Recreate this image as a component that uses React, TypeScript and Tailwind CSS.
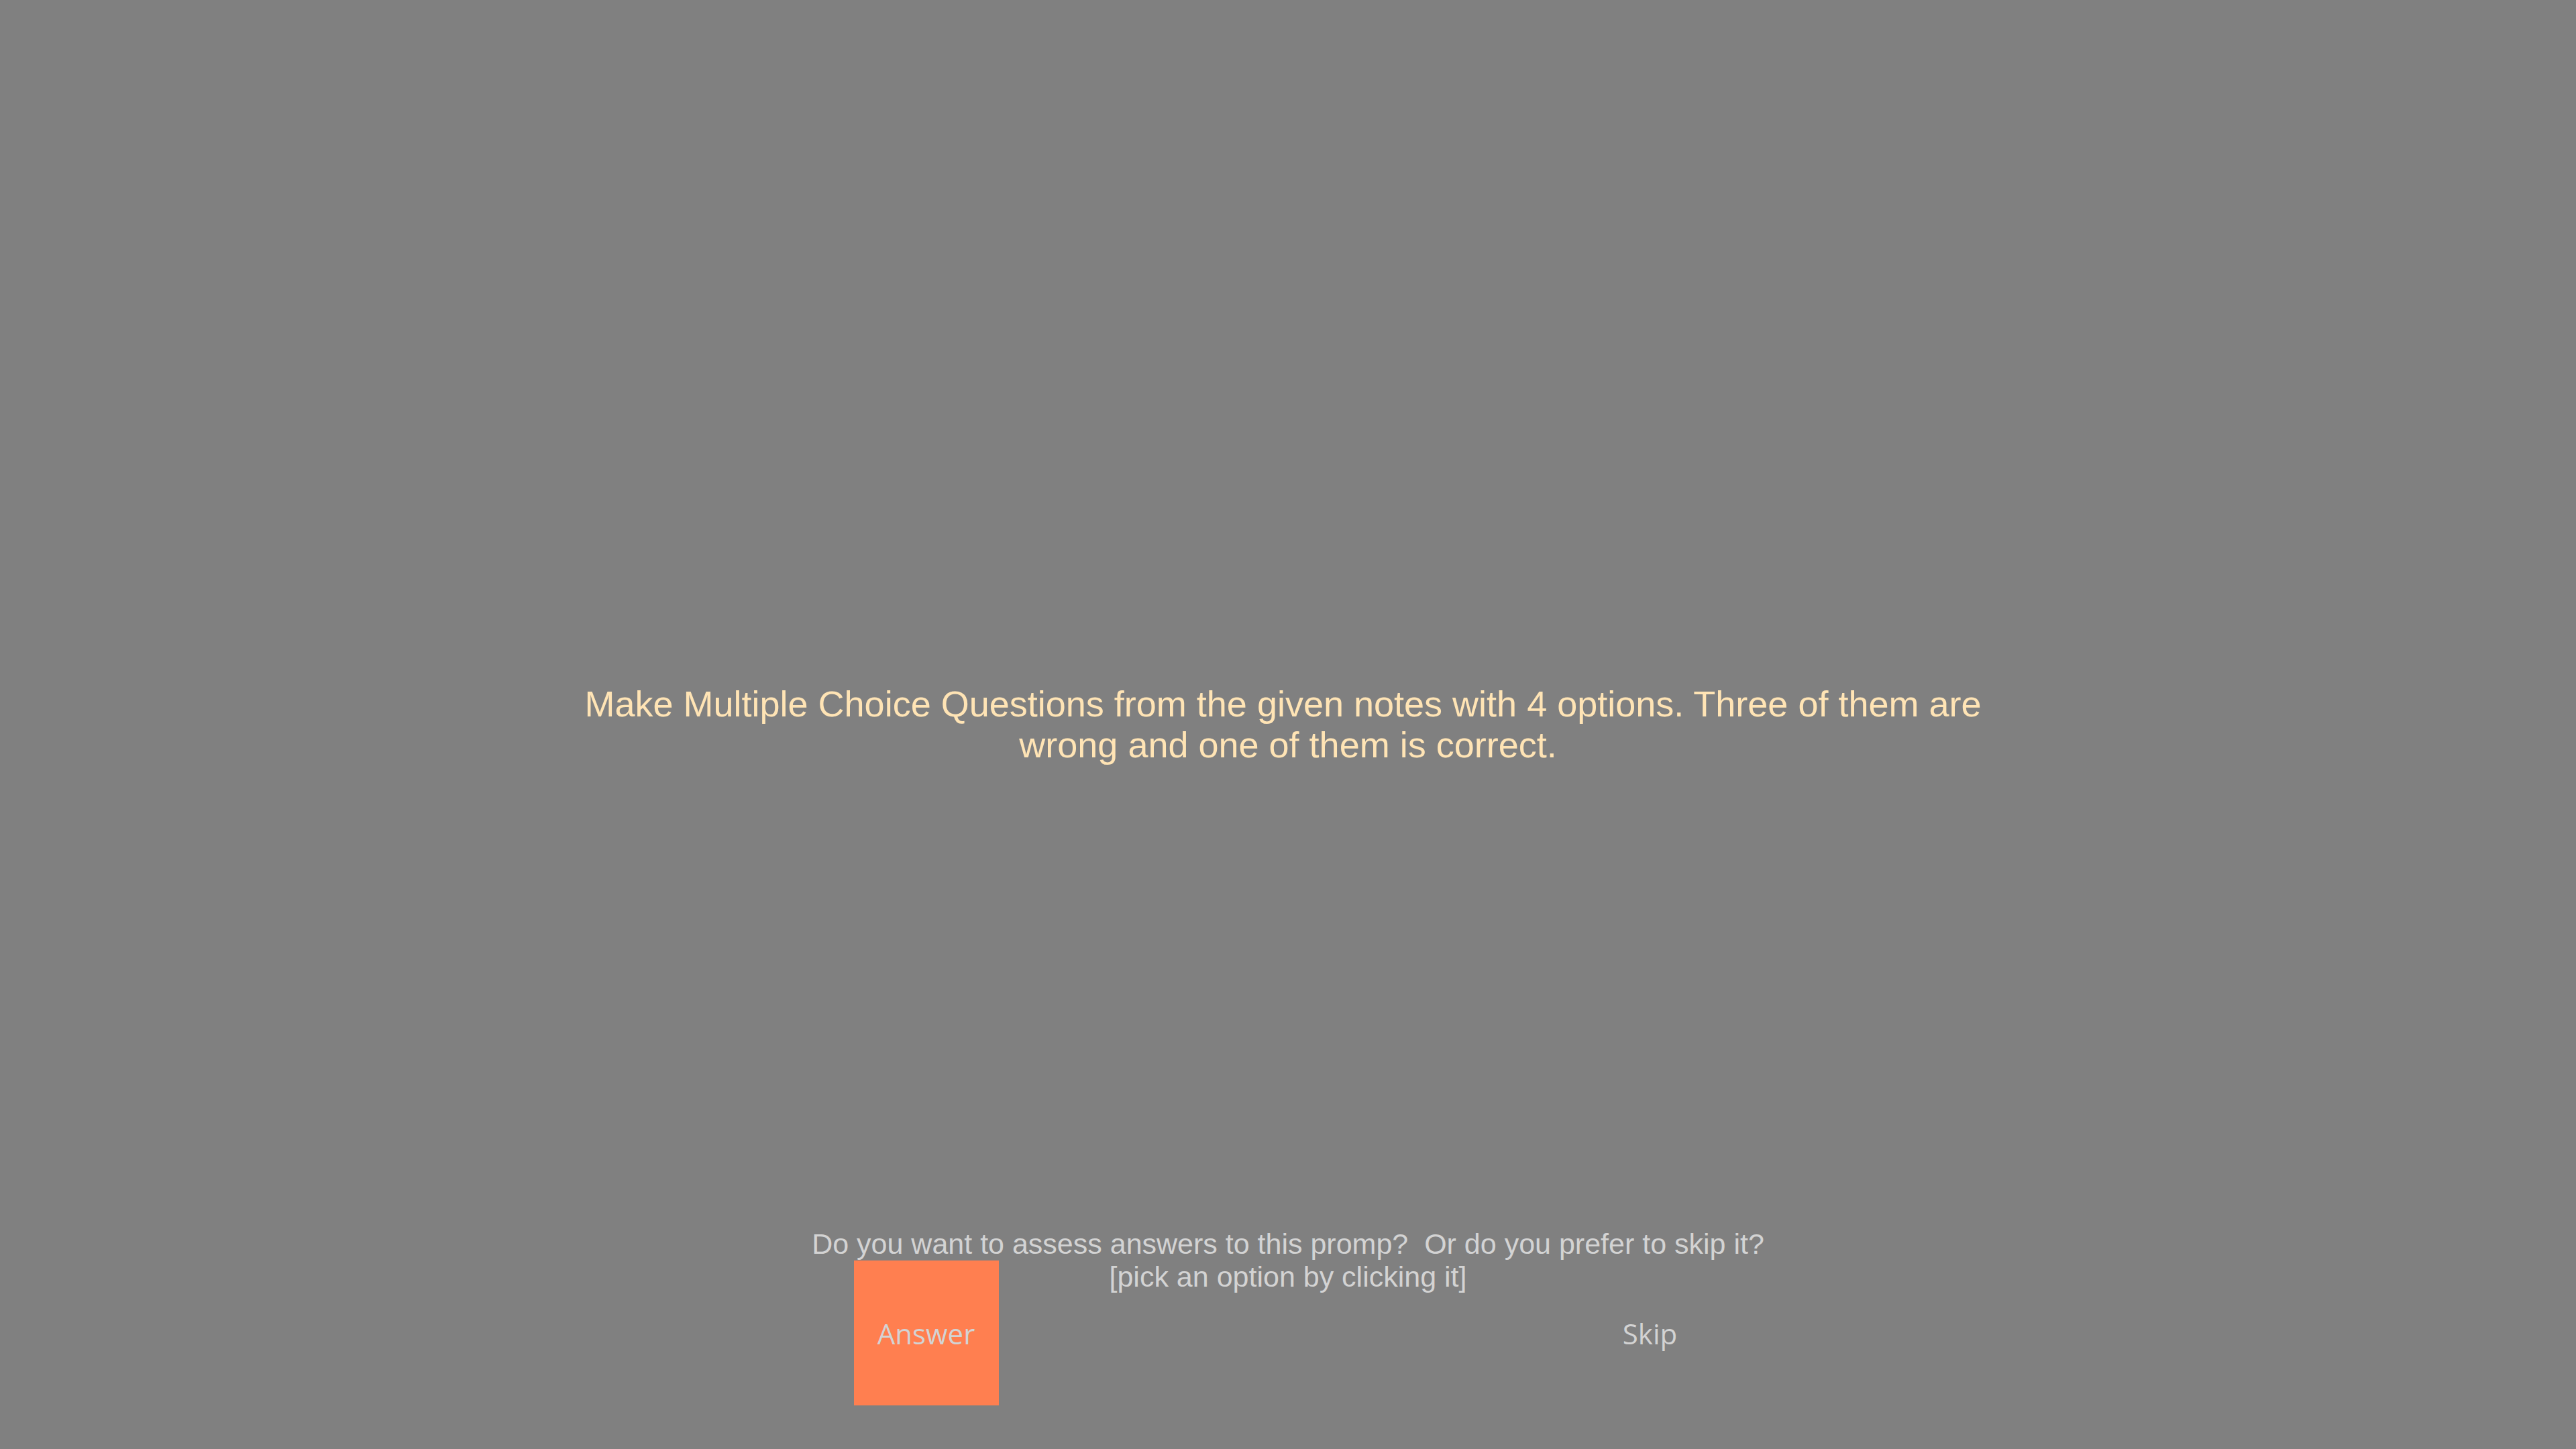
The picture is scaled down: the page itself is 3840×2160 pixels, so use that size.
export default function App() {
  return (
    <div className="w-screen h-screen bg-[#808080] flex flex-col overflow-hidden">
      <div className="flex-1 flex items-center justify-center pt-[330px]">
        <p
          className="max-w-[2180px] text-center text-[54px] leading-[61px] text-[#ffe4b5]"
          style={{ fontFamily: '"Liberation Sans", Arial, sans-serif' }}
        >
          {"Make Multiple Choice Questions from the given notes with 4 options. Three of them are\u00a0 wrong and one of them is correct."}
        </p>
      </div>
      <div className="flex flex-col items-center pb-[65px]">
        <div
          className="h-[49px] text-center text-[43px] leading-[49px] text-[#d3d3d3] whitespace-pre"
          style={{ fontFamily: '"Liberation Sans", Arial, sans-serif' }}
        >
          <div>Do you want to assess answers to this promp?  Or do you prefer to skip it?</div>
          <div>[pick an option by clicking it]</div>
        </div>
        <div
          className="flex justify-center gap-[863px] text-[42px] text-[#d3d3d3]"
          style={{ fontFamily: '"Open Sans", sans-serif' }}
        >
          <button className="w-[216px] h-[216px] bg-[#ff7f50] flex items-center justify-center">
            Answer
          </button>
          <button className="w-[216px] h-[216px] flex items-center justify-center">
            Skip
          </button>
        </div>
      </div>
    </div>
  );
}
